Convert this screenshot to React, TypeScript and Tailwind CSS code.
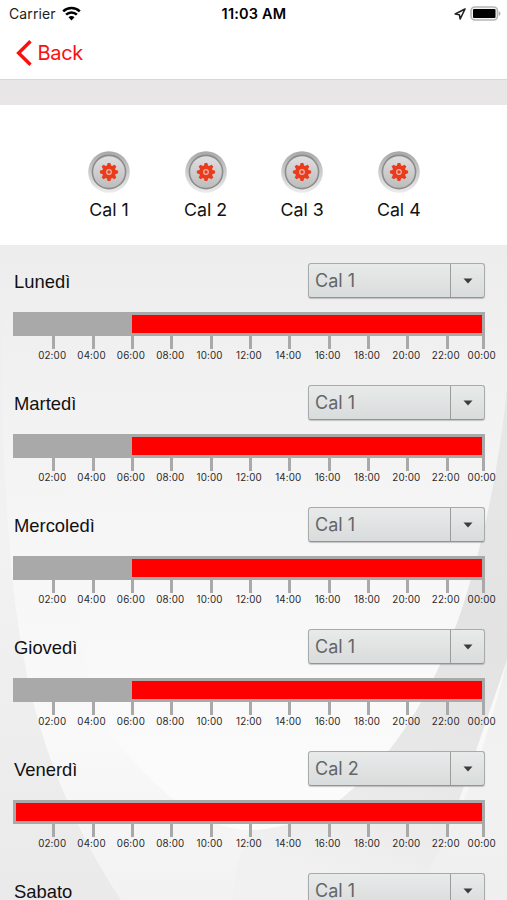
import React from 'react';

const CALENDARS = ['Cal 1', 'Cal 2', 'Cal 3', 'Cal 4'];

const DAYS = [
    { name: 'Lunedì', calendar: 'Cal 1', from: 6 },
    { name: 'Martedì', calendar: 'Cal 1', from: 6 },
    { name: 'Mercoledì', calendar: 'Cal 1', from: 6 },
    { name: 'Giovedì', calendar: 'Cal 1', from: 6 },
    { name: 'Venerdì', calendar: 'Cal 2', from: 0 },
];

const HOURS = ['02:00', '04:00', '06:00', '08:00', '10:00', '12:00', '14:00', '16:00', '18:00', '20:00', '22:00'];

function StatusBar() {
    return (
        <div className="grid h-[27px] grid-cols-3 items-center pl-[9px] pr-[6px] text-[14px] text-[#222]">
            <div className="flex items-center gap-[6px]">
                <span className="tracking-[0.1px]">Carrier</span>
                <svg width="19" height="15" viewBox="0 0 19 15" fill="none" stroke="#000" strokeWidth="2.5">
                    <path d="M1.2 5.4a11.8 11.8 0 0 1 16.6 0" />
                    <path d="M4.1 8.7a7.6 7.6 0 0 1 10.8 0" />
                    <path d="M9.5 14.4 6.5 11.3a4.2 4.2 0 0 1 6 0z" fill="#000" stroke="none" />
                </svg>
            </div>
            <span className="-ml-[2px] text-center text-[14.5px] font-semibold tracking-[0.2px] text-black">11:03 AM</span>
            <div className="flex items-center justify-end gap-[4px]">
                <svg width="12" height="12" viewBox="0 0 12 12" fill="none" stroke="#222" strokeWidth="1.6" strokeLinejoin="round">
                    <path d="M11 1 1.2 6l4.2.7.8 4.3z" />
                </svg>
                <svg width="31" height="15" viewBox="0 0 31 15">
                    <rect x="1" y="1" width="26.5" height="13" rx="4" fill="#f4f4f4" stroke="#b5b5b5" strokeWidth="1.6" />
                    <rect x="3" y="3" width="22.5" height="9" rx="1" fill="#000" />
                    <path d="M28.8 5.2c2.2.8 2.2 3.8 0 4.6z" fill="#aaa" />
                </svg>
            </div>
        </div>
    );
}

function GearButton() {
    return (
        <svg width="44" height="44" viewBox="0 0 44 44">
            <defs>
                <linearGradient id="rim" x1="0" y1="0" x2="0" y2="1">
                    <stop offset="0" stopColor="#a8a8a8" />
                    <stop offset="0.55" stopColor="#cfcfcf" />
                    <stop offset="1" stopColor="#ececec" />
                </linearGradient>
                <linearGradient id="face" x1="0" y1="0" x2="0" y2="1">
                    <stop offset="0" stopColor="#e0e0e0" />
                    <stop offset="1" stopColor="#bcbcbc" />
                </linearGradient>
            </defs>
            <circle cx="22" cy="22" r="20.8" fill="url(#rim)" />
            <circle cx="22" cy="22" r="16.6" fill="url(#face)" stroke="#8c8c8c" strokeWidth="1.6" />
            <g fill="#ea3c1c">
                <circle cx="22" cy="22" r="6.8" />
                {[0, 45, 90, 135, 180, 225, 270, 315].map((angle) => (
                    <path key={angle} d="M19.6 16.6 20.7 12.9h2.6L24.4 16.6z" transform={`rotate(${angle} 22 22)`} />
                ))}
            </g>
            <circle cx="22" cy="22" r="2.3" fill="#ea3c1c" stroke="#ecb9ae" strokeWidth="1.2" />
        </svg>
    );
}

function Backdrop() {
    return (
        <svg className="absolute inset-0" width="507" height="655" viewBox="0 245 507 655">
            <defs>
                <linearGradient id="base" x1="0" y1="0" x2="0" y2="1">
                    <stop offset="0" stopColor="#eeedee" />
                    <stop offset="0.45" stopColor="#f3f2f3" />
                    <stop offset="1" stopColor="#ebeaeb" />
                </linearGradient>
                <linearGradient id="oval" x1="0" y1="0" x2="0" y2="1">
                    <stop offset="0" stopColor="#eeedee" />
                    <stop offset="0.2" stopColor="#f2f1f2" />
                    <stop offset="0.5" stopColor="#f8f7f8" />
                    <stop offset="0.75" stopColor="#faf9fa" />
                    <stop offset="1" stopColor="#f3f2f3" />
                </linearGradient>
                <linearGradient id="inner" gradientUnits="userSpaceOnUse" x1="0" y1="245" x2="0" y2="830">
                    <stop offset="0" stopColor="#eeedee" />
                    <stop offset="0.22" stopColor="#f2f1f2" />
                    <stop offset="0.56" stopColor="#f8f7f8" />
                    <stop offset="1" stopColor="#fdfcfd" />
                </linearGradient>
                <linearGradient id="crescent" gradientUnits="userSpaceOnUse" x1="490" y1="400" x2="330" y2="880">
                    <stop offset="0" stopColor="#e9e8e9" />
                    <stop offset="0.45" stopColor="#e4e3e4" />
                    <stop offset="0.75" stopColor="#e9e8e9" />
                    <stop offset="1" stopColor="#f2f1f2" />
                </linearGradient>
                <linearGradient id="corner" x1="0" y1="0" x2="0" y2="1">
                    <stop offset="0" stopColor="#f1f0f1" />
                    <stop offset="0.5" stopColor="#f3f2f3" />
                    <stop offset="1" stopColor="#f0eff0" />
                </linearGradient>
            </defs>
            <path d="M0 245h507v655H0z" fill="url(#base)" />
            <path d="M0 245C1 400 4 560 25 665C40 745 74 830 121 900H507V245z" fill="url(#oval)" />
            <path d="M507 385C500 460 485 540 458 620C432 690 400 750 342 798C315 817 285 829 250 830C240 850 235 875 232 900H425L507 660z" fill="url(#crescent)" />
            <path d="M60 245C60 520 75 690 115 740C160 795 205 830 250 830C285 829 315 817 342 798C400 750 432 690 458 620C485 540 500 460 507 385V245z" fill="url(#inner)" />
            <path d="M507 660C498 700 484 745 468 790C450 835 428 866 420 900H507z" fill="url(#corner)" />
        </svg>
    );
}

function CalendarSelect({ value }: { value: string }) {
    return (
        <button className="flex h-[35px] w-[177px] rounded-[3px] border border-[#a9abab] border-b-[#939595] bg-linear-to-b from-[#e9ebeb] to-[#d9dcdc] shadow-[0_1px_1px_rgba(0,0,0,0.2)]">
            <span className="flex h-full w-[142px] items-center border-r border-[#9a9c9c] pl-[6px] text-[18px] text-[#666]">{value}</span>
            <span className="flex h-full flex-1 items-center justify-center">
                <svg width="10" height="6" viewBox="0 0 10 6">
                    <path d="M0.5 0.5h9L5 5.5z" fill="#3c3c3c" />
                </svg>
            </span>
        </button>
    );
}

function DayHeader({ name, calendar }: { name: string; calendar: string }) {
    return (
        <div className="flex h-[35px] items-center justify-between pl-[14px] pr-[22px]">
            <span className="pt-[2px] font-['Liberation_Sans',sans-serif] text-[18.4px] text-[#111]">{name}</span>
            <CalendarSelect value={calendar} />
        </div>
    );
}

function Tick({ label }: { label: string }) {
    return (
        <div className="flex w-[39.37px] shrink-0 flex-col items-center">
            <div className="h-[13px] w-[3px] bg-[#a9a9a9]" />
            <span className="-ml-[3px] text-[9.8px] leading-[13px] tracking-[0.15px] text-[#2a2a2a]">{label}</span>
        </div>
    );
}

function DaySchedule({ name, calendar, from }: { name: string; calendar: string; from: number }) {
    return (
        <div className="h-[122px] pt-[18px]">
            <DayHeader name={name} calendar={calendar} />
            <div className="ml-[13px] mt-[14px] flex h-[24px] w-[472px] justify-end bg-[#a9a9a9] py-[3px] pr-[3px]">
                <div className="h-[18px] bg-[#ff0000]" style={{ width: from === 0 ? 466 : 350 }} />
            </div>
            {/* the midnight mark closes the bar, so it sits closer than the others */}
            <div className="flex pl-[34px]">
                {HOURS.map((hour) => (
                    <Tick key={hour} label={hour} />
                ))}
                <div className="-ml-[3.4px]">
                    <Tick label="00:00" />
                </div>
            </div>
        </div>
    );
}

export default function App() {
    return (
        <div className="h-[900px] w-[507px] overflow-hidden bg-white font-['Inter',sans-serif]">
            <StatusBar />
            <div className="flex h-[52px] items-center gap-[5.5px] pl-[16px] text-[#fb1010]">
                <svg width="16" height="26" viewBox="0 0 16 26" fill="none" stroke="currentColor" strokeWidth="3.4">
                    <path d="M14.5 1.2 2.6 13l11.9 11.8" />
                </svg>
                <span className="text-[20px] tracking-[-0.3px]">Back</span>
            </div>
            <div className="h-[26px] border-t border-[#d8d7d8] bg-[#e8e6e7]" />
            <div className="flex h-[140px] gap-[52.6px] pl-[87px] pt-[45px]">
                {CALENDARS.map((label) => (
                    <div key={label} className="flex w-[44px] flex-col items-center">
                        <GearButton />
                        <span className="mt-[3px] whitespace-nowrap text-[17.8px] leading-[26px] text-[#111]">{label}</span>
                    </div>
                ))}
            </div>
            <div className="relative h-[655px] overflow-hidden">
                <Backdrop />
                <div className="relative">
                    {DAYS.map((day) => (
                        <DaySchedule key={day.name} {...day} />
                    ))}
                    <div className="pt-[18px]">
                        <DayHeader name="Sabato" calendar="Cal 1" />
                    </div>
                </div>
            </div>
        </div>
    );
}
